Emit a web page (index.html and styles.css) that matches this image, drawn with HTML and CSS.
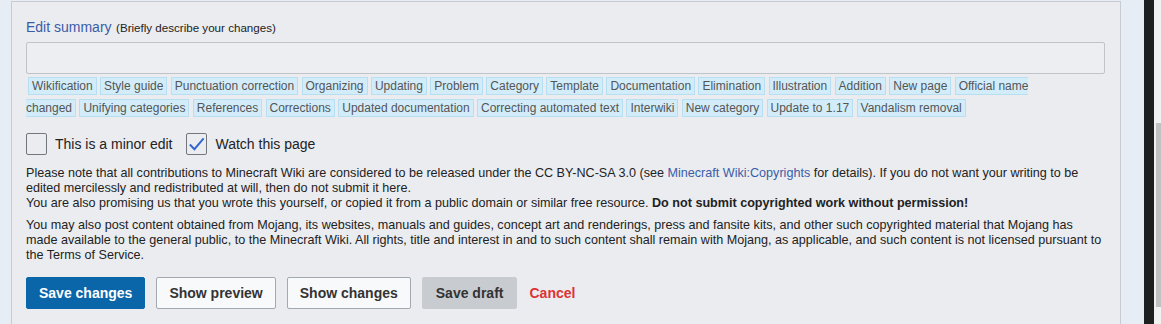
FILE: index.html
```html
<!DOCTYPE html>
<html lang="en">

<head>
    <meta charset="UTF-8">
    <title>Edit summary</title>
    <link rel="stylesheet" href="styles.css">
</head>

<body>
    <div class="page">
        <div class="side-left"></div>

        <!-- edit options panel -->
        <div class="edit-options">
            <div class="summary-label">
                <span class="summary-title">Edit summary</span>
                <span class="summary-hint">(Briefly describe your changes)</span>
            </div>
            <input class="summary-input" type="text">

            <!-- summary presets -->
            <div class="summary-tags">
                <span class="tag">Wikification</span>
                <span class="tag">Style guide</span>
                <span class="tag">Punctuation correction</span>
                <span class="tag">Organizing</span>
                <span class="tag">Updating</span>
                <span class="tag">Problem</span>
                <span class="tag">Category</span>
                <span class="tag">Template</span>
                <span class="tag">Documentation</span>
                <span class="tag">Elimination</span>
                <span class="tag">Illustration</span>
                <span class="tag">Addition</span>
                <span class="tag">New page</span>
                <span class="tag">Official name changed</span>
                <span class="tag">Unifying categories</span>
                <span class="tag">References</span>
                <span class="tag">Corrections</span>
                <span class="tag">Updated documentation</span>
                <span class="tag">Correcting automated text</span>
                <span class="tag">Interwiki</span>
                <span class="tag">New category</span>
                <span class="tag">Update to 1.17</span>
                <span class="tag">Vandalism removal</span>
            </div>

            <!-- checkboxes -->
            <div class="checks">
                <label class="check">
                    <span class="box"></span>
                    This is a minor edit
                </label>
                <label class="check">
                    <span class="box">
                        <svg width="20" height="20" viewBox="0 0 20 20">
                            <path d="M3 10.5 L7.8 15.5 L17.5 4" fill="none" stroke="#36c" stroke-width="2"/>
                        </svg>
                    </span>
                    Watch this page
                </label>
            </div>

            <div class="notice">
                <p>Please note that all contributions to Minecraft Wiki are considered to be released under the CC BY-NC-SA 3.0 (see <a href="#">Minecraft Wiki:Copyrights</a> for details). If you do not want your writing to be edited mercilessly and redistributed at will, then do not submit it here.<br>
                You are also promising us that you wrote this yourself, or copied it from a public domain or similar free resource. <b>Do not submit copyrighted work without permission!</b></p>
                <p>You may also post content obtained from Mojang, its websites, manuals and guides, concept art and renderings, press and fansite kits, and other such copyrighted material that Mojang has made available to the general public, to the Minecraft Wiki. All rights, title and interest in and to such content shall remain with Mojang, as applicable, and such content is not licensed pursuant to the Terms of Service.</p>
            </div>

            <!-- buttons -->
            <div class="buttons">
                <button class="btn btn-primary">Save changes</button>
                <button class="btn">Show preview</button>
                <button class="btn">Show changes</button>
                <button class="btn btn-draft">Save draft</button>
                <a class="cancel" href="#">Cancel</a>
            </div>
        </div>

        <div class="side-right"></div>
        <div class="dark-strip"></div>
        <div class="scrollbar">
            <div class="thumb"></div>
        </div>
    </div>
</body>

</html>
```

FILE: styles.css
```css
/* base */
body {
    margin: 0;
    font-family: "Liberation Sans", Arial, sans-serif;
    color: #222;
}

.page {
    display: flex;
    height: 324px;
    overflow: hidden;
    background-color: #e6edf5;
}

.side-left {
    width: 11px;
}

/* panel */
.edit-options {
    flex: 1;
    margin-top: 1px;
    background-color: #eaecf0;
    border-top: 1px solid #c8ccd1;
    border-left: 1px solid #c8ccd1;
    border-right: 1px solid #c8ccd1;
    padding: 15px 14px 0 14px;
}

.summary-label {
    line-height: 20px;
}

.summary-title {
    font-size: 14px;
    color: #3a5ca8;
}

.summary-hint {
    font-size: 11.6px;
    color: #222;
}

.summary-input {
    display: block;
    box-sizing: border-box;
    width: 1079px;
    height: 32px;
    margin: 4px 0 0 0;
    border: 1px solid #c0c4c9;
    border-radius: 2px;
    background-color: #eceef1;
}

/* presets */
.summary-tags {
    width: 1035px;
    margin-top: 1px;
    font-size: 12px;
    line-height: 22px;
    color: #555;
}

.tag {
    background-color: #d2ecfa;
    border: 1px solid #b8def2;
    padding: 1px 3px;
}

.tag:first-child {
    margin-left: 2px;
}

/* checkboxes */
.checks {
    display: flex;
    gap: 14px;
    margin-top: 14px;
}

.check {
    display: flex;
    align-items: center;
    gap: 8px;
    font-size: 14px;
    white-space: nowrap;
    color: #222;
}

.box {
    flex-shrink: 0;
    box-sizing: border-box;
    width: 21px;
    height: 22px;
    border: 1px solid #72777d;
    border-radius: 2px;
    display: flex;
    align-items: center;
    justify-content: center;
}

/* notice */
.notice {
    margin-top: 11px;
    font-size: 12.6px;
    line-height: 15px;
}

.notice p {
    margin: 0 0 7px 0;
}

.notice a {
    color: #3a5ca8;
    text-decoration: none;
}

/* buttons */
.buttons {
    display: flex;
    align-items: center;
    gap: 11px;
    margin-top: 14px;
}

.btn {
    height: 32px;
    padding: 0 12px;
    font-family: inherit;
    font-size: 14px;
    font-weight: bold;
    color: #333;
    background-color: #f8f9fa;
    border: 1px solid #a2a9b1;
    border-radius: 2px;
}

.btn-primary {
    background-color: #0b65a9;
    border-color: #0b65a9;
    color: white;
}

.btn-draft {
    padding: 0 13px;
    background-color: #c8ccd1;
    border-color: #c8ccd1;
}

.cancel {
    margin-left: 1px;
    font-size: 14px;
    font-weight: bold;
    color: #d33;
    text-decoration: none;
}

/* right side */
.side-right {
    width: 23px;
}

.dark-strip {
    width: 10px;
    background-color: #1e2020;
}

.scrollbar {
    width: 7px;
    background-color: #f1f1f1;
    padding-top: 123px;
}

.thumb {
    margin-left: 2px;
    height: 184px;
    background-color: #c1c1c1;
}
```
